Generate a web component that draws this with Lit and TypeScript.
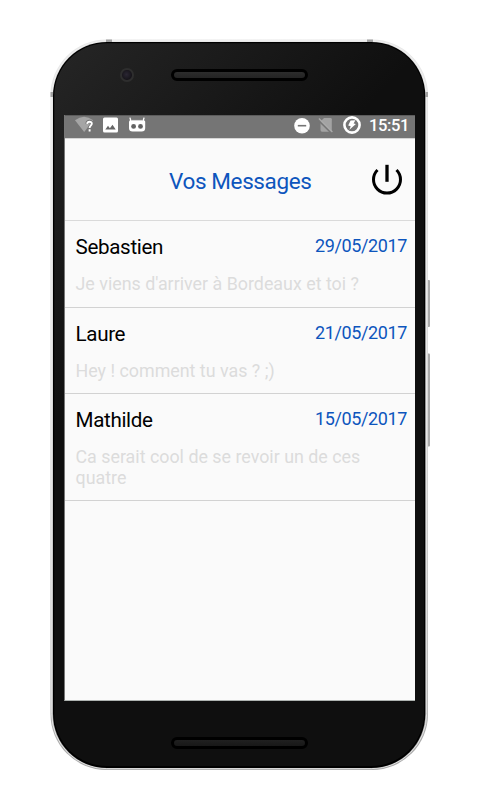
import { LitElement, html, css, svg } from "lit";
import { customElement, property } from "lit/decorators.js";

interface Message {
  name: string;
  date: string;
  text: string;
}

const MESSAGES: Message[] = [
  { name: "Sebastien", date: "29/05/2017", text: "Je viens d'arriver à Bordeaux et toi ?" },
  { name: "Laure", date: "21/05/2017", text: "Hey ! comment tu vas ? ;)" },
  { name: "Mathilde", date: "15/05/2017", text: "Ca serait cool de se revoir un de ces quatre" },
];

@customElement("status-bar")
export class StatusBar extends LitElement {
  static styles = css`
    :host {
      display: flex;
      align-items: center;
      height: 23.5px;
      box-sizing: border-box;
      padding-bottom: 3px;
      background: #757575;
      border-top: 1px solid #5c5c5c;
      color: #fff;
      flex: none;
    }
    svg { display: block; flex: none; }
    .wifi { margin-left: 9.5px; }
    .picture { margin-left: 8px; }
    .robot { margin-left: 10px; }
    .quiet { margin-left: auto; }
    .sim { margin-left: 8px; }
    .battery { margin-left: 9px; }
    .time {
      font: 500 16.6px/20px Roboto, sans-serif;
      letter-spacing: -0.4px;
      margin: 2px 5.5px 0 8px;
      width: 40px;
      white-space: nowrap;
    }
  `;

  render() {
    return html`
      <svg class="wifi" width="20" height="18" viewBox="0 0 20 18">
        <path d="M0 4.3Q9-3 18.2 4.3L9.2 16Z" fill="#a5a5a5" />
        <path d="M12.2 7.8C12.4 4.7 17 4.7 16.9 7.7C16.8 9.7 14.8 9.7 14.7 12V15" fill="none" stroke="#757575" stroke-width="3.6" />
        <path d="M12.2 7.9C12.4 4.9 17 5 16.8 7.8C16.7 9.6 14.6 9.8 14.6 11.9M14.6 13.2V15.4" fill="none" stroke="#fff" stroke-width="1.9" />
      </svg>
      <svg class="picture" width="15" height="16" viewBox="0 0 15 16">
        <rect x="0" y="0.5" width="15" height="15" rx="1.5" fill="#fff" />
        <path d="M2.3 12.5L5 8.8L6.9 11.2L9.5 7.8L12.7 12.5Z" fill="#666" />
      </svg>
      <svg class="robot" width="18" height="16" viewBox="0 0 18 16">
        <path d="M1.9 0.6L2.9 4M16.1 0.6L15.1 4" stroke="#fff" stroke-width="1.3" />
        <path d="M2.6 2.9H15.4Q17.2 3.2 17.2 4.8V11Q17.2 14.6 13.6 14.6H4.6Q1 14.6 1 11V4.8Q1 3.2 2.6 2.9Z" fill="#fff" />
        <path d="M3 3.4H15" stroke="#cacaca" stroke-width="0.9" />
        <circle cx="5.6" cy="9.4" r="2.4" fill="#626262" />
        <circle cx="12.5" cy="9.4" r="2.4" fill="#626262" />
      </svg>
      <svg class="quiet" width="16" height="17" viewBox="0 0 16 17">
        <circle cx="8" cy="8.7" r="7.8" fill="#fff" />
        <path d="M3.8 8.7H12.2" stroke="#757575" stroke-width="1.6" />
      </svg>
      <svg class="sim" width="16" height="16" viewBox="0 0 16 16">
        <path d="M6 1H12.5Q13.8 1 13.8 2.3V14.8H4Q2.5 14.8 2.5 13V4.5Z" fill="#a3a3a3" />
        <path d="M0.3 3L13.3 16" stroke="#757575" stroke-width="1.7" />
        <path d="M0.9 1.6L14.4 15" stroke="#a9a9a9" stroke-width="1.4" />
      </svg>
      <svg class="battery" width="18" height="19" viewBox="0 0 18 19">
        <circle cx="9" cy="9" r="7.6" fill="none" stroke="#fff" stroke-width="2.6" />
        <path d="M7.6 4.4L12.4 4.2L10.6 7.4L12.9 8L6.4 13.8L7.7 10.2L5.2 9.6Z" fill="#fff" />
      </svg>
      <div class="time">15:51</div>
    `;
  }
}

@customElement("message-row")
export class MessageRow extends LitElement {
  @property() name = "";
  @property() date = "";
  @property() text = "";

  static styles = css`
    :host {
      display: block;
      padding: 14px 8px 12.4px 10.5px;
      border-bottom: 1px solid #d2d2d2;
      font-family: Roboto, sans-serif;
    }
    .head {
      display: flex;
      justify-content: space-between;
      align-items: flex-start;
      height: 38px;
    }
    .name { color: #000; font-size: 20.6px; line-height: 25px; letter-spacing: -0.33px; }
    .date { color: #0d55bd; font-size: 18px; line-height: 22px; letter-spacing: -0.4px; margin-right: -0.4px; }
    .text { color: #dcdcdc; font-size: 17.85px; line-height: 21px; width: 300px; }
  `;

  render() {
    return html`
      <div class="head">
        <div class="name">${this.name}</div>
        <div class="date">${this.date}</div>
      </div>
      <div class="text">${this.text}</div>
    `;
  }
}

const band = (x: number, y: number, w: number, h: number) =>
  svg`<rect x=${x} y=${y} width=${w} height=${h} fill="#a2a2a2" />`;

@customElement("app-root")
export class AppRoot extends LitElement {
  static styles = css`
    :host {
      display: flex;
      justify-content: center;
      width: 480px;
      height: 800px;
      box-sizing: border-box;
      padding-top: 40px;
      background: #fff;
      font-family: Roboto, sans-serif;
    }
    .phone {
      position: relative;
      display: flex;
      flex-direction: column;
      width: 378px;
      height: 730.5px;
    }
    .shell { position: absolute; inset: 0; overflow: visible; }
    .bezel {
      position: relative;
      flex: none;
      height: 74.5px;
    }
    .chin { position: relative; flex: 1; }
    .speaker {
      position: absolute;
      left: 120px;
      top: 29px;
      width: 137px;
      height: 12px;
      box-sizing: border-box;
      border: 3px solid #000;
      border-radius: 6px;
      background: linear-gradient(#2c2c2c, #232323);
    }
    .chin .speaker { top: 36px; background: linear-gradient(#202020, #181818); }
    .camera {
      position: absolute;
      left: 69px;
      top: 28px;
      width: 13.5px;
      height: 13.5px;
      box-sizing: border-box;
      border: 2px solid #2e2e2e;
      border-radius: 50%;
      background: radial-gradient(circle at 45% 45%, #2a2633, #17151b 65%);
    }
    .screen {
      position: relative;
      display: flex;
      flex-direction: column;
      margin: 0 14.5px 0 13px;
      height: 586px;
      flex: none;
      box-sizing: border-box;
      background: #fafafa;
      border-left: 1px solid #777;
      border-bottom: 1px solid #aeb3b0;
    }
    .header {
      display: grid;
      grid-template-columns: 1fr auto 1fr;
      align-items: center;
      height: 83.2px;
      flex: none;
      box-sizing: border-box;
      border-top: 1px solid #d5d5d5;
      border-bottom: 1px solid #dadada;
    }
    .title {
      grid-column: 2;
      color: #0d55bd;
      font-size: 22.5px;
      line-height: 28px;
      letter-spacing: -0.4px;
      margin: 2.6px 0 0 1px;
    }
    .power { justify-self: end; margin-right: 11.5px; display: block; }
  `;

  render() {
    return html`
      <div class="phone">
        <svg class="shell" width="378" height="731" viewBox="0 0 378 731">
          <defs>
            <linearGradient id="metal" x1="0" y1="0" x2="0" y2="1">
              <stop offset="0" stop-color="#e8e8e8" />
              <stop offset="0.5" stop-color="#d4d4d4" />
              <stop offset="1" stop-color="#a8a8a8" />
            </linearGradient>
            <linearGradient id="glass" gradientUnits="userSpaceOnUse" x1="0" y1="0" x2="200" y2="190">
              <stop offset="0" stop-color="#262626" />
              <stop offset="1" stop-color="#0f0f0f" />
            </linearGradient>
          </defs>
          <rect x="375" y="240" width="4" height="47" rx="1" fill="#aaa" />
          <rect x="375" y="313.500" width="4" height="93" rx="1" fill="#aaa" />
          <rect x="-0.500" y="-0.500" width="377.500" height="730.500" rx="56" fill="url(#metal)" />
          <rect x="0.700" y="0.700" width="375" height="728" rx="55" fill="none" stroke="#f3f3f3" stroke-width="0.800" />
          ${band(55, -0.5, 6, 2.5)}${band(316, -0.5, 6, 2.5)}
          ${band(-0.5, 52, 2.5, 5)}${band(374.5, 52, 2.5, 5)}
          <rect x="2" y="2" width="372.300" height="726" rx="54" fill="#000" />
          <rect x="3.300" y="3.300" width="369.700" height="722.700" rx="52.500" fill="url(#glass)" />
        </svg>
        <div class="bezel">
          <div class="camera"></div>
          <div class="speaker"></div>
        </div>
        <div class="screen">
          <status-bar></status-bar>
          <div class="header">
            <div class="title">Vos Messages</div>
            <svg class="power" width="32" height="32" viewBox="0 0 32 32">
              <path d="M6.500 6A13.500 13.500 0 1 0 25.500 6" fill="none" stroke="#000" stroke-width="3" />
              <path d="M16 0.800V17.800" stroke="#000" stroke-width="3.300" />
            </svg>
          </div>
          ${MESSAGES.map(
            (m) => html`<message-row .name=${m.name} .date=${m.date} .text=${m.text}></message-row>`,
          )}
        </div>
        <div class="chin"><div class="speaker"></div></div>
      </div>
    `;
  }
}
